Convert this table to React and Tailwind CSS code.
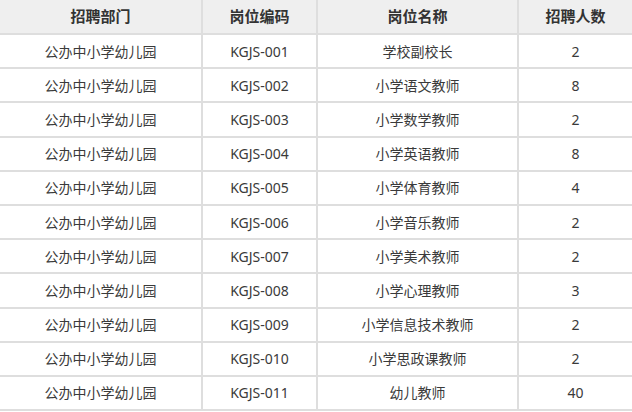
import React from 'react';

const rows = [
  ['公办中小学幼儿园', 'KGJS-001', '学校副校长', '2'],
  ['公办中小学幼儿园', 'KGJS-002', '小学语文教师', '8'],
  ['公办中小学幼儿园', 'KGJS-003', '小学数学教师', '2'],
  ['公办中小学幼儿园', 'KGJS-004', '小学英语教师', '8'],
  ['公办中小学幼儿园', 'KGJS-005', '小学体育教师', '4'],
  ['公办中小学幼儿园', 'KGJS-006', '小学音乐教师', '2'],
  ['公办中小学幼儿园', 'KGJS-007', '小学美术教师', '2'],
  ['公办中小学幼儿园', 'KGJS-008', '小学心理教师', '3'],
  ['公办中小学幼儿园', 'KGJS-009', '小学信息技术教师', '2'],
  ['公办中小学幼儿园', 'KGJS-010', '小学思政课教师', '2'],
  ['公办中小学幼儿园', 'KGJS-011', '幼儿教师', '40'],
];

const headers = ['招聘部门', '岗位编码', '岗位名称', '招聘人数'];

export default function App() {
  return (
    <div className="w-[632px] h-[412px] overflow-hidden bg-white font-['Noto_Sans','Noto_Sans_CJK_SC',sans-serif] text-[#333]">
      <table className="-ml-[2px] -mt-[2px] border-collapse table-fixed w-[634px]">
        <colgroup>
          <col className="w-[203px]" />
          <col className="w-[115px]" />
          <col className="w-[201px]" />
          <col className="w-[115px]" />
        </colgroup>
        <thead>
          <tr className="h-[35px] bg-[#efefef]">
            {headers.map((h) => (
              <th key={h} className="border-2 border-[#dedede] text-[15px] font-bold text-center p-0">{h}</th>
            ))}
          </tr>
        </thead>
        <tbody>
          {rows.map((r) => (
            <tr key={r[1]} className="h-[34.2px]">
              {r.map((c, i) => (
                <td key={i} className="border-2 border-[#dedede] text-[14px] text-center p-0 text-[#3a3a3a]">{c}</td>
              ))}
            </tr>
          ))}
        </tbody>
      </table>
    </div>
  );
}
